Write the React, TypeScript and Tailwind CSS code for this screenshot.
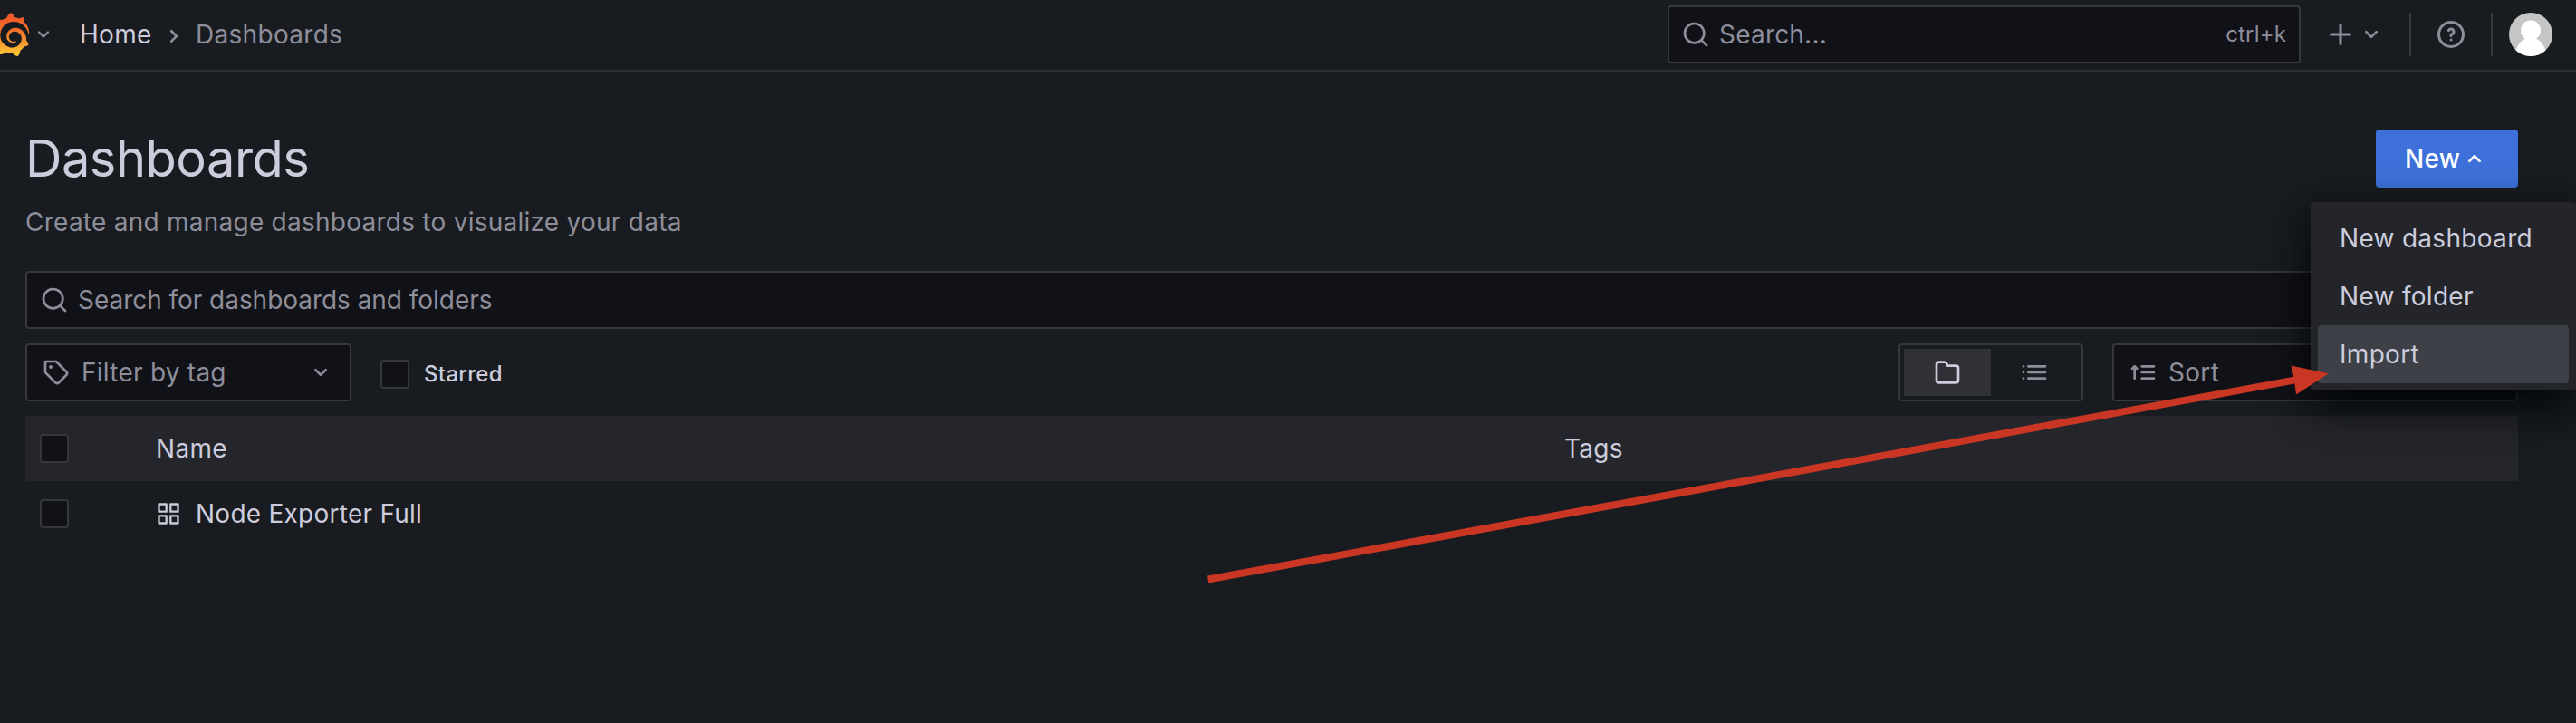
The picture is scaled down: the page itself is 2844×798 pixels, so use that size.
import type { ReactNode } from "react";
import { SiGrafana } from "react-icons/si";

const paths = {
  angleDown:
    "M17,9.17a1,1,0,0,0-1.41,0L12,12.71,8.46,9.17a1,1,0,0,0-1.41,0,1,1,0,0,0,0,1.42l4.24,4.24a1,1,0,0,0,1.42,0L17,10.59A1,1,0,0,0,17,9.17Z",
  search:
    "M21.71,20.29,18,16.61A9,9,0,1,0,16.61,18l3.68,3.68a1,1,0,0,0,1.42,0A1,1,0,0,0,21.71,20.29ZM11,18a7,7,0,1,1,7-7A7,7,0,0,1,11,18Z",
  plus: "M19,11H13V5a1,1,0,0,0-2,0v6H5a1,1,0,0,0,0,2h6v6a1,1,0,0,0,2,0V13h6a1,1,0,0,0,0-2Z",
  question:
    "M11.29,15.29a1.58,1.58,0,0,0-.12.15.76.76,0,0,0-.09.18.64.64,0,0,0-.06.18,1.36,1.36,0,0,0,0,.2.84.84,0,0,0,.08.38.9.9,0,0,0,.54.54.94.94,0,0,0,.76,0,.9.9,0,0,0,.54-.54A1,1,0,0,0,13,16a1,1,0,0,0-.29-.71A1,1,0,0,0,11.29,15.29ZM12,2A10,10,0,1,0,22,12,10,10,0,0,0,12,2Zm0,18a8,8,0,1,1,8-8A8,8,0,0,1,12,20ZM12,7A3,3,0,0,0,9.4,8.5a1,1,0,1,0,1.73,1A1,1,0,0,1,12,9a1,1,0,0,1,0,2,1,1,0,0,0-1,1v1a1,1,0,0,0,2,0v-.18A3,3,0,0,0,12,7Z",
  tag: "M7.5,6A1.5,1.5,0,1,0,9,7.5,1.5,1.5,0,0,0,7.5,6Zm13.62,4.71L12.71,2.29A1,1,0,0,0,12,2H3A1,1,0,0,0,2,3v9a1,1,0,0,0,.29.71l8.42,8.41a3,3,0,0,0,4.24,0L21.12,15a3,3,0,0,0,0-4.24Zm-1.41,2.82h0l-6.18,6.17a1,1,0,0,1-1.41,0L4,11.59V4h7.59l8.12,8.12a1,1,0,0,1,.29.71A1,1,0,0,1,19.71,13.53Z",
  folder:
    "M19,5.5H12.72l-.32-1a3,3,0,0,0-2.84-2H5a3,3,0,0,0-3,3v13a3,3,0,0,0,3,3H19a3,3,0,0,0,3-3V8.5A3,3,0,0,0,19,5.5Zm1,13a1,1,0,0,1-1,1H5a1,1,0,0,1-1-1V5.5a1,1,0,0,1,1-1H9.56a1,1,0,0,1,.95.68l.54,1.64A1,1,0,0,0,12,7.5h7a1,1,0,0,1,1,1Z",
  apps: "M10,13H3a1,1,0,0,0-1,1v7a1,1,0,0,0,1,1h7a1,1,0,0,0,1-1V14A1,1,0,0,0,10,13ZM9,20H4V15H9ZM21,2H14a1,1,0,0,0-1,1v7a1,1,0,0,0,1,1h7a1,1,0,0,0,1-1V3A1,1,0,0,0,21,2ZM20,9H15V4h5Zm1,4H14a1,1,0,0,0-1,1v7a1,1,0,0,0,1,1h7a1,1,0,0,0,1-1V14A1,1,0,0,0,21,13Zm-1,7H15V15h5ZM10,2H3A1,1,0,0,0,2,3v7a1,1,0,0,0,1,1h7a1,1,0,0,0,1-1V3A1,1,0,0,0,10,2ZM9,9H4V4H9Z",
};

function Icon({ name, className = "size-8" }: { name: keyof typeof paths; className?: string }) {
  return (
    <svg viewBox="0 0 24 24" fill="currentColor" className={`shrink-0 ${className}`}>
      <path d={paths[name]} />
    </svg>
  );
}

function ListIcon() {
  return (
    <svg viewBox="0 0 24 24" fill="none" stroke="currentColor" strokeWidth="2" strokeLinecap="round" className="size-8 shrink-0">
      <path d="M3 7h.01M3 12h.01M3 17h.01M7 7h14M7 12h14M7 17h14" />
    </svg>
  );
}

function SortIcon() {
  return (
    <svg viewBox="0 0 24 24" fill="none" stroke="currentColor" strokeWidth="2" strokeLinecap="round" strokeLinejoin="round" className="size-8 shrink-0">
      <path d="M5 17V7.4M3 8.9l2-1.9 2 1.9M11 7h10M11 12h10M11 17h10" />
    </svg>
  );
}

function Logo() {
  return (
    <>
      <svg className="absolute size-0">
        <defs>
          <linearGradient id="flame" x1="0" y1="0" x2="0" y2="1">
            <stop offset="0.1" stopColor="#f05a28" />
            <stop offset="0.45" stopColor="#f2762a" />
            <stop offset="1" stopColor="#fbca36" />
          </linearGradient>
        </defs>
      </svg>
      <SiGrafana fill="url(#flame)" className="-ml-3.5 size-12 shrink-0" />
    </>
  );
}

function Avatar() {
  return (
    <svg viewBox="0 0 48 48" className="ml-[18px] size-12 shrink-0">
      <clipPath id="round">
        <circle cx="24" cy="24" r="24" />
      </clipPath>
      <g clipPath="url(#round)">
        <rect width="48" height="48" fill="#c5c5c5" />
        <circle cx="24" cy="19.5" r="11" fill="#fff" />
        <path d="M6 48C8 35 15 29 19 28.5h10C33 29 40 35 42 48Z" fill="#fff" />
      </g>
    </svg>
  );
}

function Checkbox() {
  return <span className="size-8 shrink-0 rounded-[4px] border-2 border-[#36373d] bg-[#111217]" />;
}

function MenuItem({ children, active }: { children: ReactNode; active?: boolean }) {
  return (
    <li className={`flex h-16 items-center rounded-[4px] pl-6 ${active ? "bg-[#3d4047]" : ""}`}>{children}</li>
  );
}

export default function App() {
  return (
    <div className="relative h-[798px] w-[2844px] overflow-hidden bg-[#181b1f] font-['Inter',sans-serif] text-[28px] leading-[44px] tracking-[0.3px] whitespace-nowrap text-[#ccccdc]">
      <header className="flex h-[79px] items-center border-b-2 border-[#2e3036] pb-px text-[#8e8e9b]">
        <Logo />
        <Icon name="angleDown" className="size-7" />
        <nav className="ml-[26px] flex items-center">
          <span className="w-[80px] text-[#ccccdc]">Home</span>
          <Icon name="angleDown" className="mt-1 ml-2 size-8 -rotate-90" />
          <span className="ml-2">Dashboards</span>
        </nav>
        <div className="ml-auto flex h-16 w-[699px] items-center rounded-[4px] border-2 border-[#36373d] bg-[#111217] pr-[14px] pl-[13px]">
          <Icon name="search" />
          <span className="ml-2.5 tracking-[0.2px]">Search...</span>
          <span className="ml-auto text-2xl tracking-[0.15px]">ctrl+k</span>
        </div>
        <Icon name="plus" className="ml-[26px] size-9" />
        <Icon name="angleDown" />
        <span className="ml-[26px] h-12 w-0.5 bg-[#36373d]" />
        <Icon name="question" className="mx-[26px] size-9" />
        <span className="h-12 w-0.5 bg-[#36373d]" />
        <Avatar />
        <span className="w-[26px]" />
      </header>

      <main className="pt-16 pr-16 pl-7">
        <div className="flex h-16 items-center justify-between">
          <h1 className="text-[56px] leading-[64px] tracking-[-0.5px]">Dashboards</h1>
          <button className="flex h-16 w-[157px] items-center rounded-[4px] bg-[#3d71d9] pl-8 font-medium text-white">
            New
            <Icon name="angleDown" className="ml-auto mr-8 size-8 rotate-180" />
          </button>
        </div>
        <p className="mt-4 tracking-[0.25px] text-[#8e8e9b]">Create and manage dashboards to visualize your data</p>

        <div className="mt-8 flex h-16 items-center rounded-[4px] border-2 border-[#36373d] bg-[#111217] pl-[14px] tracking-[-0.04px] text-[#8e8e9b]">
          <Icon name="search" />
          <span className="ml-2.5">Search for dashboards and folders</span>
        </div>

        <div className="mt-4 flex h-16 items-center text-[#8e8e9b]">
          <div className="flex h-16 w-[360px] items-center rounded-[4px] border-2 border-[#36373d] bg-[#111217] pr-4 pl-4">
            <Icon name="tag" />
            <span className="ml-3 tracking-[0.25px]">Filter by tag</span>
            <Icon name="angleDown" className="ml-auto size-8" />
          </div>
          <label className="mt-1 ml-8 flex items-center text-2xl leading-8 font-medium tracking-[0.3px] text-[#ccccdc]">
            <Checkbox />
            <span className="ml-4">Starred</span>
          </label>
          <div className="ml-auto flex h-16 w-[204px] rounded-[4px] border-2 border-[#36373d] p-1">
            <span className="flex w-24 items-center justify-center bg-[#2f3136] text-[#ccccdc]">
              <Icon name="folder" />
            </span>
            <span className="flex w-24 items-center justify-center">
              <ListIcon />
            </span>
          </div>
          <div className="ml-8 flex h-16 w-[448px] items-center rounded-[4px] border-2 border-[#36373d] bg-[#111217] pl-4">
            <SortIcon />
            <span className="ml-3">Sort</span>
          </div>
        </div>

        <div className="mt-4 flex h-[72px] items-center bg-[#24262b] pl-4">
          <Checkbox />
          <span className="ml-24 w-[1555px]">Name</span>
          <span>Tags</span>
        </div>
        <div className="flex h-[72px] items-center pl-4">
          <Checkbox />
          <Icon name="apps" className="ml-24 size-7" />
          <span className="ml-4 tracking-[0.25px]">Node Exporter Full</span>
        </div>
      </main>

      <ul className="absolute top-[223px] right-0 w-[293px] rounded-[4px] bg-[#24252a] p-2 shadow-[0_16px_48px_rgb(1,4,9)]">
        <MenuItem>New dashboard</MenuItem>
        <MenuItem>New folder</MenuItem>
        <MenuItem active>Import</MenuItem>
      </ul>

      <svg className="pointer-events-none absolute inset-0" width="2844" height="798" fill="#c93623">
        <path d="M1333 635.5 2532.3 415.8 2529.5 403.5 2571 412.3 2535 435.5 2533.4 423.6 1334.3 643.5Z" />
      </svg>
    </div>
  );
}
